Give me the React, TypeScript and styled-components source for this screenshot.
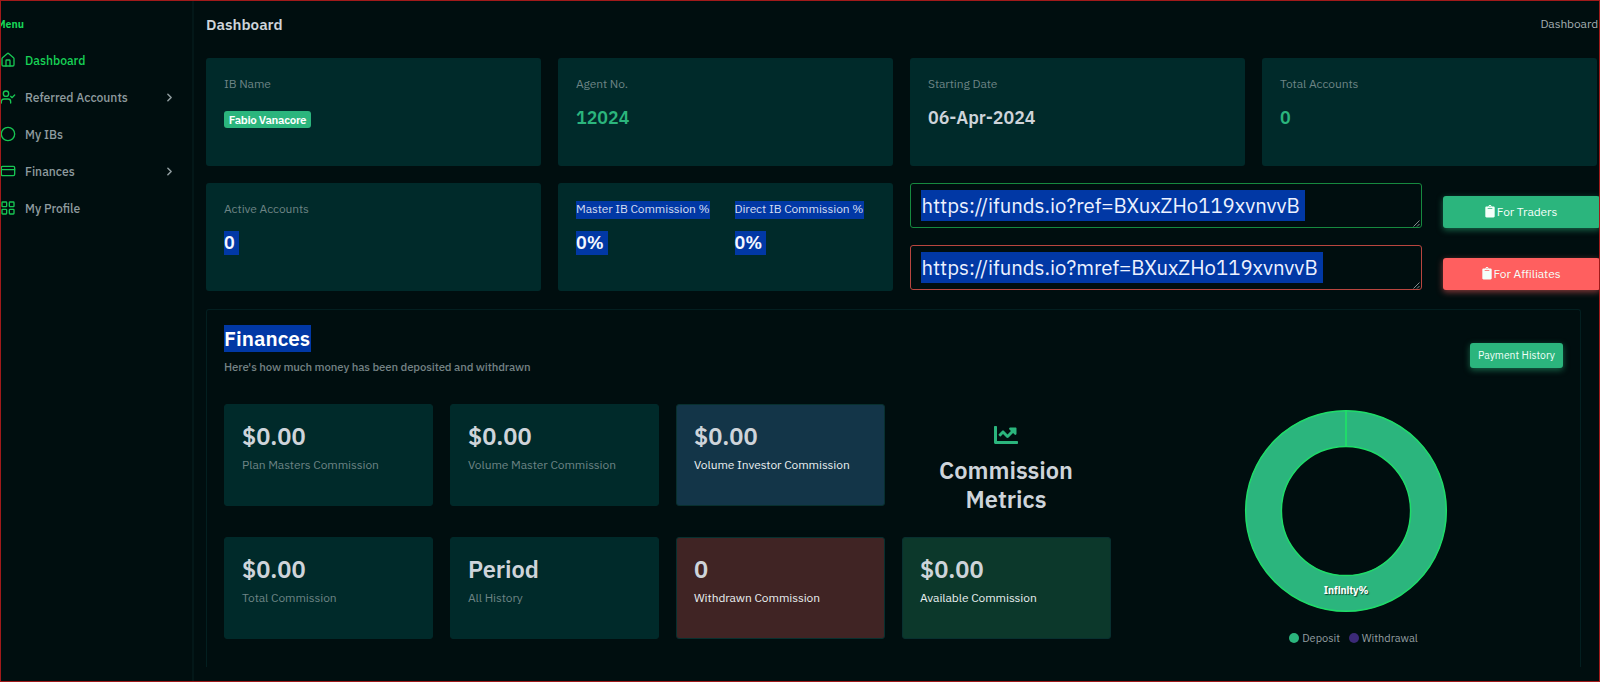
import React from 'react';
import styled, { createGlobalStyle } from 'styled-components';
import { ChevronRight, Circle, CreditCard, House, LayoutGrid, UserCheck } from 'lucide-react';
import { FaChartLine, FaClipboard } from 'react-icons/fa';

const c = {
  bg: '#000e0f',
  card: '#002a2a',
  green: '#2bb57d',
  neon: '#17d356',
  red: '#ff5f5f',
  mark: '#0138a5',
  text: '#ced4da',
  muted: '#6d8485',
};

const Global = createGlobalStyle`
  *, *::before, *::after { box-sizing: border-box; }
  body {
    margin: 0;
    background: ${c.bg};
    color: ${c.text};
    font-family: 'IBM Plex Sans', Roboto, 'Liberation Sans', sans-serif;
    font-size: 12px;
    overflow: hidden;
  }
`;

const Page = styled.div`
  display: flex;
  width: 1600px;
  height: 682px;
  border: 1px solid #a01a1a;
  overflow: hidden;
`;

const Sidebar = styled.nav`
  flex: none;
  width: 193px;
  border-right: 2px solid #031718;
`;

const MenuTitle = styled.div`
  margin: 15px 0 0 -4px;
  line-height: 16px;
  height: 25px;
  font-size: 10.5px;
  font-weight: 700;
  color: ${c.neon};
`;

const NavItem = styled.a<{ $active?: boolean }>`
  display: flex;
  align-items: center;
  height: 37px;
  padding-right: 16px;
  font-size: 12.13px;
  font-weight: 500;
  color: ${(p) => (p.$active ? c.neon : '#8f9c9f')};
  white-space: nowrap;

  > svg:first-child {
    flex: none;
    margin: 1px 9px 0 -1px;
    color: #17c653;
  }

  > svg:last-child {
    margin-top: 2px;
  }
`;

const NavLabel = styled.span`
  flex: 1;
  padding-top: 1px;
`;

const Main = styled.main`
  flex: none;
  width: 1405px;
  padding-left: 12px;
`;

const TopBar = styled.header`
  display: flex;
  align-items: center;
  justify-content: space-between;
  height: 57px;
  padding: 0 1px 11px 0;
`;

const PageTitle = styled.h1`
  margin: 0;
  font-size: 15.2px;
  font-weight: 600;
`;

const Crumb = styled.span`
  padding-bottom: 1px;
  letter-spacing: -0.1px;
  color: #a3adb0;
`;

const StatRow = styled.section<{ $gap?: number }>`
  display: grid;
  grid-template-columns: repeat(4, 335px);
  gap: 17px;
  height: 108px;
  margin-bottom: ${(p) => p.$gap ?? 17}px;
`;

const StatCard = styled.article`
  display: flex;
  gap: 24.5px;
  padding: 18px;
  background: ${c.card};
  border-radius: 3px;
`;

const StatLabel = styled.div<{ $marked?: boolean; $width?: number }>`
  height: 18px;
  line-height: 16px;
  margin-bottom: 12px;
  width: ${(p) => (p.$width ? `${p.$width}px` : 'auto')};
  letter-spacing: -0.09px;
  color: ${(p) => (p.$marked ? '#d5def2' : c.muted)};
  background: ${(p) => (p.$marked ? c.mark : 'none')};
  white-space: nowrap;
`;

const StatValue = styled.div<{ $color?: string; $width?: number }>`
  height: 24px;
  line-height: 24px;
  width: ${(p) => (p.$width ? `${p.$width}px` : 'auto')};
  font-size: 17.8px;
  font-weight: 600;
  color: ${(p) => (p.$width ? '#f4f7ff' : p.$color ?? c.text)};
  background: ${(p) => (p.$width ? c.mark : 'none')};
  white-space: nowrap;
`;

const Badge = styled.div`
  width: 87px;
  height: 17px;
  border-radius: 3px;
  background: ${c.green};
  color: #fff;
  font-size: 11.5px;
  font-weight: 600;
  line-height: 17.5px;
  letter-spacing: -0.3px;
  text-align: center;
  white-space: nowrap;
`;

const BadgeSlot = styled.div`
  padding-top: 5px;
`;

const Links = styled.div`
  grid-column: 3 / 5;
  display: flex;
  flex-direction: column;
  gap: 17px;
`;

const LinkRow = styled.div`
  display: flex;
  align-items: flex-end;
  gap: 21px;
  height: 45px;
`;

const LinkField = styled.div<{ $color: string }>`
  position: relative;
  flex: none;
  width: 512px;
  height: 45px;
  padding: 6px 10px;
  border: 1px solid ${(p) => p.$color};
  border-radius: 3px;

  svg {
    position: absolute;
    right: 1px;
    bottom: 0;
  }
`;

const LinkText = styled.div<{ $width: number }>`
  width: ${(p) => p.$width}px;
  height: 31px;
  padding-left: 0.5px;
  line-height: 31px;
  font-size: 20.36px;
  color: #edf2ff;
  background: ${c.mark};
  white-space: nowrap;
`;

const CopyButton = styled.button<{ $color: string }>`
  flex: none;
  display: flex;
  align-items: center;
  justify-content: center;
  gap: 2px;
  width: 157px;
  height: 32px;
  padding: 0 1px 1px 0;
  border: 0;
  border-radius: 3px;
  background: ${(p) => p.$color};
  box-shadow: 0 2px 6px ${(p) => p.$color}88;
  color: #f4fffa;
  font: inherit;
  letter-spacing: -0.08px;
  white-space: nowrap;

  svg {
    width: 10px;
    height: 12.5px;
  }
`;

const Finance = styled.section`
  width: 1375px;
  height: 358px;
  padding: 15px 17px 0;
  border: 1px solid #031f20;
  border-bottom: 0;
  border-radius: 3px 3px 0 0;
`;

const FinanceHead = styled.div`
  display: flex;
  justify-content: space-between;
  height: 79px;
`;

const FinanceTitle = styled.h2`
  width: 86.5px;
  height: 27px;
  margin: 0;
  line-height: 28px;
  font-size: 20.75px;
  font-weight: 600;
  color: #fff;
  background: ${c.mark};
`;

const FinanceNote = styled.p`
  margin: 6px 0 0;
  line-height: 18px;
  font-size: 11.4px;
  font-weight: 500;
  letter-spacing: -0.12px;
  color: #748284;
`;

const HistoryButton = styled.button`
  width: 93px;
  height: 25px;
  margin-top: 18px;
  padding: 0 0 1px;
  border: 0;
  border-radius: 3px;
  background: ${c.green};
  box-shadow: 0 2px 6px ${c.green}88;
  color: #effff8;
  font: 400 10.38px 'IBM Plex Sans', Roboto, 'Liberation Sans', sans-serif;
`;

const FinanceBody = styled.div`
  display: flex;
`;

const Metrics = styled.div`
  display: grid;
  grid-template-columns: repeat(4, 209px);
  grid-auto-rows: 101.5px;
  column-gap: 17px;
  row-gap: 31.5px;
`;

const MetricCard = styled.article<{ $bg?: string }>`
  padding: 17px 17px;
  border: 1px solid ${(p) => (p.$bg ? '#08302f' : c.card)};
  border-radius: 3px;
  background: ${(p) => p.$bg ?? c.card};
`;

const MetricValue = styled.div`
  height: 29px;
  line-height: 28px;
  font-size: 23.6px;
  font-weight: 600;
`;

const MetricLabel = styled.div<{ $bright?: boolean }>`
  margin-top: 5px;
  line-height: 18px;
  letter-spacing: -0.08px;
  color: ${(p) => (p.$bright ? '#e9eff0' : c.muted)};
  white-space: nowrap;
`;

const MetricsTitle = styled.div`
  display: flex;
  flex-direction: column;
  align-items: center;
  padding: 19px 1px 0 0;
  font-size: 23.6px;
  font-weight: 600;
  line-height: 29px;
  text-align: center;

  svg {
    flex: none;
    margin-bottom: 9px;
    color: ${c.green};
  }
`;

const Chart = styled.div`
  flex: 1;
  display: flex;
  flex-direction: column;
  align-items: center;
  padding: 5px 0 0 17px;
`;

const Legend = styled.div`
  display: flex;
  gap: 8.5px;
  margin: 17px 0 0 16px;
  font-size: 11px;
  line-height: 16px;
  color: #939ea1;
`;

const LegendItem = styled.span<{ $color: string }>`
  display: flex;
  align-items: center;
  gap: 3px;

  &::before {
    content: '';
    width: 10px;
    height: 10px;
    border-radius: 50%;
    background: ${(p) => p.$color};
  }
`;

const DonutLabel = styled.text`
  font-size: 10.2px;
  font-weight: 700;
  letter-spacing: -0.1px;
  fill: #fff;
  text-anchor: middle;
  text-shadow: 1px 1px 1px rgba(0, 0, 0, 0.6);
`;

const nav = [
  { label: 'Dashboard', Icon: House, active: true },
  { label: 'Referred Accounts', Icon: UserCheck, nested: true },
  { label: 'My IBs', Icon: Circle },
  { label: 'Finances', Icon: CreditCard, nested: true },
  { label: 'My Profile', Icon: LayoutGrid },
];

const links = [
  { url: 'https://ifunds.io?ref=BXuxZHo119xvnvvB', width: 384, border: '#16893f', label: 'For Traders', fill: c.green },
  { url: 'https://ifunds.io?mref=BXuxZHo119xvnvvB', width: 402, border: '#b9463f', label: 'For Affiliates', fill: c.red },
];

const metricsTop = [
  { value: '$0.00', label: 'Plan Masters Commission' },
  { value: '$0.00', label: 'Volume Master Commission' },
  { value: '$0.00', label: 'Volume Investor Commission', bg: '#133548' },
];

const metricsBottom = [
  { value: '$0.00', label: 'Total Commission' },
  { value: 'Period', label: 'All History' },
  { value: '0', label: 'Withdrawn Commission', bg: '#402424' },
  { value: '$0.00', label: 'Available Commission', bg: '#0c382b' },
];

type MetricData = { value: string; label: string; bg?: string };

const Metric = ({ value, label, bg }: MetricData) => (
  <MetricCard $bg={bg}>
    <MetricValue>{value}</MetricValue>
    <MetricLabel $bright={!!bg}>{label}</MetricLabel>
  </MetricCard>
);

const Donut = () => (
  <svg width="204" height="204" viewBox="0 0 204 204">
    <circle cx="102" cy="102" r="82.5" fill="none" stroke={c.green} strokeWidth="36" />
    <g fill="none" stroke="#1fdc69">
      <circle cx="102" cy="102" r="100.3" strokeWidth="1.5" />
      <circle cx="102" cy="102" r="64.6" strokeWidth="1.5" />
      <path d="M102 1v37" strokeWidth="2" />
    </g>
    <DonutLabel x="102" y="184.5">Infinity%</DonutLabel>
  </svg>
);

export default function App() {
  return (
    <>
      <Global />
      <Page>
        <Sidebar>
          <MenuTitle>Menu</MenuTitle>
          {nav.map(({ label, Icon, active, nested }) => (
            <NavItem key={label} $active={active}>
              <Icon size={16} />
              <NavLabel>{label}</NavLabel>
              {nested && <ChevronRight size={13} strokeWidth={2.8} />}
            </NavItem>
          ))}
        </Sidebar>

        <Main>
          <TopBar>
            <PageTitle>Dashboard</PageTitle>
            <Crumb>Dashboard</Crumb>
          </TopBar>

          <StatRow>
            <StatCard>
              <div>
                <StatLabel>IB Name</StatLabel>
                <BadgeSlot>
                  <Badge>Fabio Vanacore</Badge>
                </BadgeSlot>
              </div>
            </StatCard>
            <StatCard>
              <div>
                <StatLabel>Agent No.</StatLabel>
                <StatValue $color={c.green}>12024</StatValue>
              </div>
            </StatCard>
            <StatCard>
              <div>
                <StatLabel>Starting Date</StatLabel>
                <StatValue>06-Apr-2024</StatValue>
              </div>
            </StatCard>
            <StatCard>
              <div>
                <StatLabel>Total Accounts</StatLabel>
                <StatValue $color={c.green}>0</StatValue>
              </div>
            </StatCard>
          </StatRow>

          <StatRow $gap={18}>
            <StatCard>
              <div>
                <StatLabel>Active Accounts</StatLabel>
                <StatValue $width={15}>0</StatValue>
              </div>
            </StatCard>
            <StatCard>
              <div>
                <StatLabel $marked $width={134}>Master IB Commission %</StatLabel>
                <StatValue $width={32}>0%</StatValue>
              </div>
              <div>
                <StatLabel $marked $width={129.5}>Direct IB Commission %</StatLabel>
                <StatValue $width={31.5}>0%</StatValue>
              </div>
            </StatCard>
            <Links>
              {links.map((l) => (
                <LinkRow key={l.label}>
                  <LinkField $color={l.border}>
                    <LinkText $width={l.width}>{l.url}</LinkText>
                    <svg width="7" height="7" viewBox="0 0 7 7" stroke="#a5adad" strokeWidth="0.8">
                      <path d="M0.5 6.5l6-6M4 6.5l2.5-2.5" />
                    </svg>
                  </LinkField>
                  <CopyButton $color={l.fill}>
                    <FaClipboard />
                    {l.label}
                  </CopyButton>
                </LinkRow>
              ))}
            </Links>
          </StatRow>

          <Finance>
            <FinanceHead>
              <div>
                <FinanceTitle>Finances</FinanceTitle>
                <FinanceNote>Here's how much money has been deposited and withdrawn</FinanceNote>
              </div>
              <HistoryButton>Payment History</HistoryButton>
            </FinanceHead>
            <FinanceBody>
              <Metrics>
                {metricsTop.map((m) => <Metric key={m.label} {...m} />)}
                <MetricsTitle>
                  <FaChartLine size={24} />
                  <div>Commission<br />Metrics</div>
                </MetricsTitle>
                {metricsBottom.map((m) => <Metric key={m.label} {...m} />)}
              </Metrics>
              <Chart>
                <Donut />
                <Legend>
                  <LegendItem $color={c.green}>Deposit</LegendItem>
                  <LegendItem $color="#3b2a78">Withdrawal</LegendItem>
                </Legend>
              </Chart>
            </FinanceBody>
          </Finance>
        </Main>
      </Page>
    </>
  );
}
